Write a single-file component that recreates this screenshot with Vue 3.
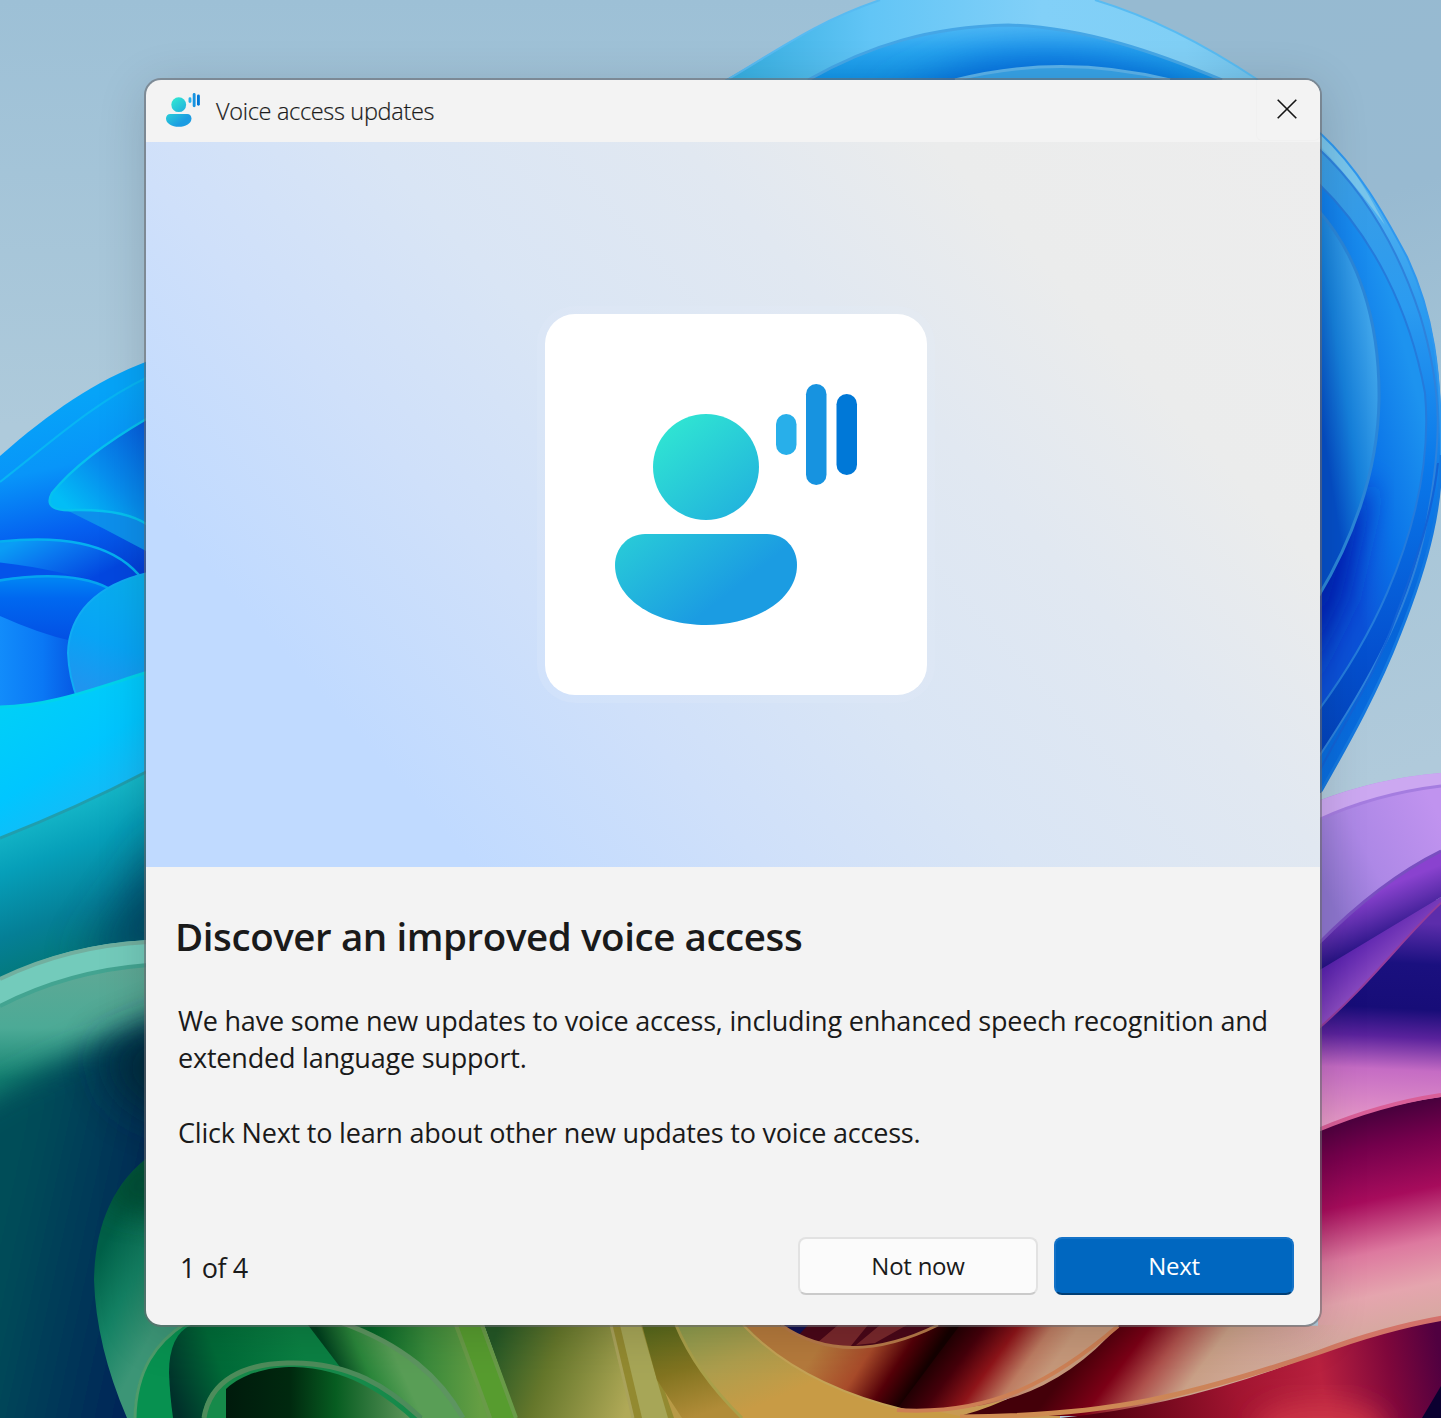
<script setup>
const title = 'Voice access updates'
const page = 1
const pageCount = 4
</script>

<template>
  <div class="desktop">
    <svg class="wallpaper" viewBox="0 0 1441 1418" aria-hidden="true">
      <defs>
        <filter id="soft" x="-30%" y="-30%" width="160%" height="160%"><feGaussianBlur stdDeviation="14" /></filter>
        <filter id="softer" x="-100%" y="-100%" width="300%" height="300%"><feGaussianBlur stdDeviation="22" /></filter>
        <linearGradient id="sky" x1="0" y1="0" x2="0" y2="1"><stop offset="0" stop-color="#9dc0d6" /><stop offset=".3" stop-color="#aecadb" /><stop offset="1" stop-color="#b2cbdc" /></linearGradient>
        <linearGradient id="skyRight" gradientUnits="userSpaceOnUse" x1="1200" y1="0" x2="1441" y2="760"><stop offset="0" stop-color="#96bad1" /><stop offset=".3" stop-color="#98bad1" /><stop offset=".6" stop-color="#a6c5d7" /><stop offset="1" stop-color="#b0cadb" /></linearGradient>
        <linearGradient id="crown" gradientUnits="userSpaceOnUse" x1="730" y1="80" x2="1300" y2="60"><stop offset="0" stop-color="#35aee0" /><stop offset=".25" stop-color="#62c5f6" /><stop offset=".55" stop-color="#82d0f8" /><stop offset=".8" stop-color="#80cff5" /><stop offset="1" stop-color="#6cbce6" /></linearGradient>
        <linearGradient id="crownSide" gradientUnits="userSpaceOnUse" x1="0" y1="130" x2="0" y2="790"><stop offset="0" stop-color="#6ec0ea" /><stop offset=".12" stop-color="#4eb0f0" /><stop offset=".28" stop-color="#2a9bf0" /><stop offset=".55" stop-color="#0e7ae8" /><stop offset=".75" stop-color="#0664d8" /><stop offset="1" stop-color="#0a6fe0" /></linearGradient>
        <linearGradient id="band1" gradientUnits="userSpaceOnUse" x1="0" y1="28" x2="0" y2="90"><stop offset="0" stop-color="#4ab6f4" /><stop offset=".4" stop-color="#26a5ef" /><stop offset="1" stop-color="#0a8de4" /></linearGradient>
        <linearGradient id="ring2" gradientUnits="userSpaceOnUse" x1="0" y1="150" x2="0" y2="780"><stop offset="0" stop-color="#3c9ee4" /><stop offset=".25" stop-color="#2b9bf0" /><stop offset=".5" stop-color="#0a79ea" /><stop offset=".8" stop-color="#0450cf" /><stop offset="1" stop-color="#0340b8" /></linearGradient>
        <linearGradient id="ring3" gradientUnits="userSpaceOnUse" x1="1320" y1="470" x2="1430" y2="440"><stop offset="0" stop-color="#0b52d8" /><stop offset=".45" stop-color="#0a73e8" /><stop offset="1" stop-color="#1d93ef" /></linearGradient>
        <linearGradient id="ring4" gradientUnits="userSpaceOnUse" x1="1318" y1="400" x2="1380" y2="390"><stop offset="0" stop-color="#054fc8" /><stop offset=".45" stop-color="#1681dc" /><stop offset="1" stop-color="#3ea3e9" /></linearGradient>
        <linearGradient id="leftBloom" gradientUnits="userSpaceOnUse" x1="60" y1="400" x2="100" y2="580"><stop offset="0" stop-color="#06a4f8" /><stop offset=".35" stop-color="#0895f9" /><stop offset=".7" stop-color="#0560f0" /><stop offset="1" stop-color="#033fd8" /></linearGradient>
        <linearGradient id="fold" gradientUnits="userSpaceOnUse" x1="75" y1="515" x2="165" y2="430"><stop offset="0" stop-color="#02bdf6" /><stop offset=".4" stop-color="#078eee" /><stop offset="1" stop-color="#0657dc" /></linearGradient>
        <linearGradient id="petal2" gradientUnits="userSpaceOnUse" x1="20" y1="540" x2="50" y2="600"><stop offset="0" stop-color="#0a9df5" /><stop offset=".4" stop-color="#0a78f0" /><stop offset="1" stop-color="#0347e0" /></linearGradient>
        <linearGradient id="petal3" gradientUnits="userSpaceOnUse" x1="0" y1="580" x2="0" y2="640"><stop offset="0" stop-color="#0082f4" /><stop offset=".3" stop-color="#0068f0" /><stop offset="1" stop-color="#0350e4" /></linearGradient>
        <linearGradient id="petal4" gradientUnits="userSpaceOnUse" x1="0" y1="0" x2="85" y2="0"><stop offset="0" stop-color="#128cfb" /><stop offset=".5" stop-color="#0a78f5" /><stop offset="1" stop-color="#0550df" /></linearGradient>
        <linearGradient id="bulb" gradientUnits="userSpaceOnUse" x1="90" y1="690" x2="135" y2="570"><stop offset="0" stop-color="#1f95ef" /><stop offset=".4" stop-color="#08a4f5" /><stop offset="1" stop-color="#08b0ee" /></linearGradient>
        <linearGradient id="cyan" gradientUnits="userSpaceOnUse" x1="20" y1="700" x2="120" y2="860"><stop offset="0" stop-color="#00cff8" /><stop offset=".4" stop-color="#00c6ff" /><stop offset="1" stop-color="#2aaeee" /></linearGradient>
        <linearGradient id="teal" gradientUnits="userSpaceOnUse" x1="50" y1="800" x2="110" y2="965"><stop offset="0" stop-color="#18bccb" /><stop offset=".3" stop-color="#069fb9" /><stop offset=".65" stop-color="#057f96" /><stop offset="1" stop-color="#02766f" /></linearGradient>
        <linearGradient id="mint" gradientUnits="userSpaceOnUse" x1="0" y1="950" x2="0" y2="1080"><stop offset="0" stop-color="#63a895" /><stop offset=".6" stop-color="#4caa96" /><stop offset="1" stop-color="#148472" /></linearGradient>
        <linearGradient id="deep" gradientUnits="userSpaceOnUse" x1="0" y1="1250" x2="140" y2="1280"><stop offset="0" stop-color="#004e58" /><stop offset=".5" stop-color="#003b59" /><stop offset="1" stop-color="#002859" /></linearGradient>
        <linearGradient id="leaf" gradientUnits="userSpaceOnUse" x1="95" y1="1260" x2="170" y2="1300"><stop offset="0" stop-color="#006048" /><stop offset=".5" stop-color="#148264" /><stop offset="1" stop-color="#3c9576" /></linearGradient>
        <linearGradient id="g1" gradientUnits="userSpaceOnUse" x1="170" y1="1390" x2="300" y2="1340"><stop offset="0" stop-color="#00302a" /><stop offset=".4" stop-color="#006b38" /><stop offset="1" stop-color="#0b8143" /></linearGradient>
        <linearGradient id="g2" gradientUnits="userSpaceOnUse" x1="225" y1="0" x2="410" y2="0"><stop offset="0" stop-color="#001a0c" /><stop offset=".35" stop-color="#00290f" /><stop offset=".6" stop-color="#075d21" /><stop offset="1" stop-color="#5d945a" /></linearGradient>
        <linearGradient id="g3" gradientUnits="userSpaceOnUse" x1="335" y1="1370" x2="390" y2="1345"><stop offset="0" stop-color="#00401e" /><stop offset=".5" stop-color="#2b873b" /><stop offset="1" stop-color="#599e56" /></linearGradient>
        <linearGradient id="g4" gradientUnits="userSpaceOnUse" x1="370" y1="0" x2="480" y2="0"><stop offset="0" stop-color="#006526" /><stop offset=".5" stop-color="#398a3b" /><stop offset="1" stop-color="#659e43" /></linearGradient>
        <linearGradient id="g5" gradientUnits="userSpaceOnUse" x1="490" y1="1350" x2="630" y2="1400"><stop offset="0" stop-color="#245826" /><stop offset=".4" stop-color="#65772b" /><stop offset="1" stop-color="#b0a957" /></linearGradient>
        <linearGradient id="g6" gradientUnits="userSpaceOnUse" x1="690" y1="1325" x2="730" y2="1418"><stop offset="0" stop-color="#8c9b4d" /><stop offset=".5" stop-color="#ae9e4d" /><stop offset="1" stop-color="#c89b45" /></linearGradient>
        <linearGradient id="g7" gradientUnits="userSpaceOnUse" x1="660" y1="1325" x2="690" y2="1418"><stop offset="0" stop-color="#58691c" /><stop offset=".5" stop-color="#827420" /><stop offset="1" stop-color="#b18c38" /></linearGradient>
        <linearGradient id="orange" gradientUnits="userSpaceOnUse" x1="820" y1="1345" x2="905" y2="1400"><stop offset="0" stop-color="#b57a3c" /><stop offset=".45" stop-color="#a84b2a" /><stop offset=".75" stop-color="#540008" /><stop offset="1" stop-color="#140000" /></linearGradient>
        <linearGradient id="red1" gradientUnits="userSpaceOnUse" x1="930" y1="1345" x2="1020" y2="1410"><stop offset="0" stop-color="#100000" /><stop offset=".3" stop-color="#45000a" /><stop offset=".55" stop-color="#8e1419" /><stop offset=".8" stop-color="#bd7c62" /><stop offset="1" stop-color="#c6987a" /></linearGradient>
        <linearGradient id="red2" gradientUnits="userSpaceOnUse" x1="1090" y1="1340" x2="1290" y2="1490"><stop offset="0" stop-color="#440009" /><stop offset=".16" stop-color="#7c0016" /><stop offset=".28" stop-color="#ae514c" /><stop offset=".42" stop-color="#c9a087" /><stop offset=".78" stop-color="#d0ac96" stop-opacity="0" /></linearGradient>
        <linearGradient id="rose" gradientUnits="userSpaceOnUse" x1="1320" y1="1110" x2="1370" y2="1340"><stop offset="0" stop-color="#380037" /><stop offset=".2" stop-color="#74004c" /><stop offset=".42" stop-color="#a70c5c" /><stop offset=".64" stop-color="#dd799f" /><stop offset=".82" stop-color="#e5a5ae" /><stop offset="1" stop-color="#d4a99e" /></linearGradient>
        <linearGradient id="crimson" gradientUnits="userSpaceOnUse" x1="1100" y1="1420" x2="1441" y2="1360"><stop offset="0" stop-color="#52000f" /><stop offset=".4" stop-color="#a11430" /><stop offset=".65" stop-color="#b9213f" /><stop offset=".85" stop-color="#7f073b" /><stop offset="1" stop-color="#500040" /></linearGradient>
        <linearGradient id="rim" gradientUnits="userSpaceOnUse" x1="1040" y1="0" x2="1441" y2="0"><stop offset="0" stop-color="#cf8c52" /><stop offset=".4" stop-color="#cc8458" /><stop offset="1" stop-color="#d4706c" /></linearGradient>
        <linearGradient id="lilac" gradientUnits="userSpaceOnUse" x1="1320" y1="880" x2="1441" y2="820"><stop offset="0" stop-color="#8e76cf" /><stop offset=".4" stop-color="#ad88e6" /><stop offset="1" stop-color="#c093ef" /></linearGradient>
        <linearGradient id="violet" gradientUnits="userSpaceOnUse" x1="1365" y1="895" x2="1385" y2="945"><stop offset="0" stop-color="#8a42cf" /><stop offset=".4" stop-color="#6230b0" /><stop offset="1" stop-color="#201080" /></linearGradient>
        <linearGradient id="violet2" gradientUnits="userSpaceOnUse" x1="1340" y1="955" x2="1370" y2="990"><stop offset="0" stop-color="#5922ae" /><stop offset="1" stop-color="#9150c3" /></linearGradient>
        <linearGradient id="navy" gradientUnits="userSpaceOnUse" x1="1360" y1="920" x2="1350" y2="1125"><stop offset="0" stop-color="#5c2dab" /><stop offset=".2" stop-color="#1a107f" /><stop offset=".42" stop-color="#170d78" /><stop offset=".56" stop-color="#5a229c" /><stop offset=".72" stop-color="#c56cc4" /><stop offset="1" stop-color="#e89bc8" /></linearGradient>
        <clipPath id="band1Clip"><path d="M808 80C870 45 930 27 1008 25C1085 27 1160 54 1222 80Z" /></clipPath>
        <clipPath id="ring3Clip"><path d="M1318 183C1372 235 1410 310 1425 393C1431 460 1414 530 1387 593C1365 644 1340 681 1318 711Z" /></clipPath>
        <clipPath id="deepClip"><path d="M0 1010Q68 974 148 968V1418H0Z" /></clipPath>
        <clipPath id="tealClip"><path d="M0 838Q75 809 148 771V980H0Z" /></clipPath>
        <clipPath id="leafClip"><path d="M155 1152C110 1183 95 1230 94 1280Q96 1346 127 1418H260V1300H155Z" /></clipPath>
      </defs>

      <rect width="1441" height="1418" fill="url(#sky)" />
      <rect x="1100" width="341" height="820" fill="url(#skyRight)" />

      <!-- top and right petals -->
      <path fill="url(#crown)" d="M725 80C775 52 815 22 880 0C940-22 1040-22 1095 0C1155 18 1210 48 1258 80Q1292 106 1320 132V200H725Z" />
      <path fill="url(#crownSide)" d="M1300 118L1320 132C1358 168 1383 212 1407 257C1434 315 1442 370 1442 455C1442 505 1431 555 1400 633C1378 690 1350 740 1321 793H1300Z" />
      <path fill="url(#band1)" d="M808 80C870 45 930 27 1008 25C1085 27 1160 54 1222 80Z" />
      <g clip-path="url(#band1Clip)">
        <path d="M880 110L960 72Q1060 38 1190 90V120Z" fill="#0560d8" filter="url(#softer)" />
      </g>
      <path fill="#37a2e6" d="M955 80Q1060 53 1170 80Z" />
      <g fill="none" stroke-width="3">
        <path stroke="#58bbf2" stroke-width="2" d="M725 81C775 52 815 22 880 0M1095 0C1155 18 1210 48 1258 80" />
        <path stroke="#45a6e6" d="M808 80C870 45 930 27 1008 25C1085 27 1160 54 1222 80" />
        <path stroke="#5bb2ea" d="M955 80Q1060 53 1170 80" />
      </g>
      <path fill="url(#ring2)" stroke="#2e82dc" stroke-width="2" d="M1318 148C1365 192 1398 248 1420 315C1442 388 1444 440 1423 540C1406 613 1370 680 1318 758Z" />
      <path fill="#78c5ec" d="M1320 133C1345 155 1363 183 1385 225Q1350 178 1320 146Z" />
      <path fill="url(#ring3)" stroke="#247bdc" stroke-width="2" d="M1318 183C1372 235 1410 310 1425 393C1431 460 1414 530 1387 593C1365 644 1340 681 1318 711Z" />
      <g clip-path="url(#ring3Clip)">
        <path d="M1300 560L1372 480L1345 600L1300 690Z" fill="#0020b6" filter="url(#soft)" />
      </g>
      <path fill="url(#ring4)" d="M1318 210C1358 255 1380 320 1379 400C1378 475 1350 544 1318 597Z" />
      <path fill="none" stroke="#2b86d8" stroke-width="3" d="M1318 210C1358 255 1380 320 1379 400C1378 475 1350 544 1318 597" />
      <path fill="none" stroke="#2f97ee" stroke-width="2" d="M1320 133C1358 168 1383 212 1407 257C1434 315 1441 370 1441 455" />
      <path fill="none" stroke="#1478e0" stroke-width="3" d="M1441 455C1441 505 1431 555 1400 633C1378 690 1350 740 1321 791" />
      <path fill="none" stroke="#1263d6" stroke-width="2" d="M1438 463C1433 510 1417 560 1397 613C1378 670 1350 712 1320 770" />

      <!-- left petals -->
      <path fill="url(#leftBloom)" d="M0 456C50 412 95 381 148 361V710H0Z" />
      <path fill="none" stroke="#08b5f4" stroke-width="2" d="M0 482C50 443 95 402 148 377" />
      <path fill="#0d8fec" d="M52 503C90 508 128 508 148 525V552Q100 526 52 503Z" />
      <path fill="url(#fold)" d="M148 418C105 443 72 468 52 493Q42 512 75 510Q125 509 148 525Z" />
      <path fill="none" stroke="#06c1ef" stroke-width="2.5" d="M148 418C105 443 72 468 52 493Q42 512 75 510Q125 509 148 525" />
      <path fill="url(#petal2)" stroke="#05aff0" stroke-width="2.5" d="M-4 542C60 535 110 542 139 575L110 592L-4 563Z" />
      <path fill="#0453ea" d="M-4 562Q60 569 110 587L100 600H-4Z" />
      <path fill="url(#petal3)" d="M-4 580Q70 568 108 588L80 645L-4 650Z" />
      <path fill="none" stroke="#05a4f0" stroke-width="2.5" d="M-4 581Q70 569 108 588" />
      <path fill="url(#petal4)" d="M0 616Q40 634 72 641L82 700L0 712Z" />
      <path fill="url(#bulb)" stroke="#10acf4" stroke-width="2" d="M148 573C95 585 69 615 68 653Q69 678 78 700H148Z" />
      <path fill="url(#cyan)" d="M0 707C50 706 90 690 148 672V775L0 842Z" />
      <path fill="none" stroke="#00d3ec" stroke-width="3" d="M0 707C50 706 90 690 148 672" />
      <path fill="url(#teal)" d="M0 838Q75 809 148 771V980H0Z" />
      <g clip-path="url(#tealClip)">
        <path d="M175 830V960L80 965Z" fill="#004163" opacity=".85" filter="url(#softer)" />
      </g>
      <path fill="none" stroke="#209eae" stroke-width="3" d="M0 838Q75 809 148 771" />
      <path fill="#73cbbb" d="M0 978Q68 944 148 940V1100H0Z" />
      <path fill="none" stroke="#72af9f" stroke-width="4" d="M0 979Q68 946 148 942" />
      <path fill="url(#mint)" d="M0 1006Q68 971 148 965V1418H0Z" />
      <path fill="none" stroke="#43a491" stroke-width="4" d="M0 1006Q68 971 148 965" />
      <g clip-path="url(#deepClip)">
        <path fill="url(#deep)" filter="url(#soft)" d="M-60 1130Q40 1058 210 1003V1480H-60Z" />
        <path fill="#002b37" opacity=".85" filter="url(#softer)" d="M200 1010L100 1050L125 1100L200 1130Z" />
      </g>
      <path fill="url(#leaf)" d="M155 1152C110 1183 95 1230 94 1280Q96 1346 127 1418H260V1300H155Z" />
      <g clip-path="url(#leafClip)">
        <path fill="#004c31" opacity=".8" filter="url(#soft)" d="M170 1130L100 1180L110 1210L170 1220Z" />
      </g>

      <!-- bottom petals -->
      <path fill="#b89a46" d="M600 1325H940V1418H600Z" />
      <path fill="#c89b55" d="M900 1400H1060V1418H900Z" />
      <path fill="#079150" d="M134 1418C135 1370 155 1342 185 1323H360V1418Z" />
      <path fill="none" stroke="#4f9b6c" stroke-width="3" d="M135 1418C136 1370 156 1342 186 1323" />
      <path fill="url(#g1)" d="M191 1325Q169 1335 169 1373Q170 1397 173 1418H360V1325Z" />
      <path fill="url(#g4)" d="M340 1325H482L517 1418H440Z" />
      <path fill="#579c2f" d="M456 1325H483L518 1418H492Z" />
      <path fill="url(#g3)" d="M308 1325H350C408 1348 440 1377 463 1418H400L340 1367Z" />
      <path fill="none" stroke="#5d9560" stroke-width="5" d="M340 1322C404 1345 440 1377 463 1418" />
      <path fill="#168a4a" d="M202 1418C207 1380 242 1362 287 1362C350 1359 390 1388 422 1418Z" />
      <path fill="url(#g2)" d="M226 1418V1389C244 1372 271 1367 294 1367C345 1368 382 1393 410 1418Z" />
      <path fill="none" stroke="#4e8c5b" stroke-width="5" d="M204 1418C210 1380 244 1364 287 1363C350 1361 389 1388 421 1418" />
      <path fill="url(#g5)" d="M484 1325H614L636 1418H517Z" />
      <path fill="none" stroke="#699b48" stroke-width="4" d="M482 1325L516 1418M456 1325L490 1418" />
      <path fill="#938a30" d="M611 1325H642L674 1418H633Z" />
      <path fill="#a7a657" d="M620 1325H641L668 1418H642Z" />
      <path fill="none" stroke="#aaa35b" stroke-width="3" d="M611 1325L633 1418" />
      <path fill="url(#g7)" d="M642 1325H678Q696 1373 745 1418H682L657 1380Z" />
      <path fill="url(#g6)" d="M675 1325H750Q810 1390 930 1410L970 1418H742Q696 1373 675 1325Z" />
      <path fill="none" stroke="#aaa04a" stroke-width="3" d="M676 1325Q696 1373 742 1418" />
      <path fill="url(#orange)" d="M745 1325H965L905 1410Q800 1385 745 1325Z" />
      <path fill="#4a0718" d="M780 1325H940Q845 1370 780 1325Z" />
      <path fill="#121050" d="M785 1325H808L798 1336Z" />
      <path fill="#79282c" d="M817 1343L838 1325H868L850 1347ZM856 1345L880 1325H907L875 1343Z" />
      <path fill="none" stroke="#b77a49" stroke-width="3" d="M781 1325Q846 1370 938 1325" />
      <path fill="url(#rose)" d="M1318 1085H1441V1320L1320 1356Q1200 1396 1140 1408V1326H1318Z" />
      <path fill="url(#red2)" d="M1090 1325H1441V1320L1320 1356Q1180 1402 1100 1416H960Q1055 1390 1090 1325Z" />
      <path fill="url(#red1)" d="M960 1325H1119Q1050 1405 947 1409H897Z" />
      <path fill="url(#crimson)" d="M1060 1418Q1190 1405 1321 1352Q1380 1329 1441 1318V1418Z" />
      <ellipse cx="1320" cy="1430" rx="65" ry="28" fill="#cc3547" filter="url(#soft)" />
      <path fill="#0b0030" d="M1441 1386V1418H1422Z" />
      <path fill="none" stroke="#c5a356" stroke-width="2" d="M743 1325Q800 1385 905 1410" />
      <path fill="none" stroke="#cd8055" stroke-width="4" d="M897 1410C992 1416 1055 1380 1118 1326" />
      <path fill="none" stroke="url(#rim)" stroke-width="5" d="M960 1417C1110 1416 1190 1396 1320 1352Q1385 1328 1443 1318" />

      <!-- right-hand lower petals -->
      <path fill="url(#navy)" d="M1318 900H1441V1097Q1380 1105 1318 1131Z" />
      <path fill="none" stroke="#d95f98" stroke-width="4" d="M1318 1130Q1380 1104 1441 1095" />
      <path fill="url(#violet2)" d="M1318 970L1441 897V903C1405 936 1370 984 1318 1029Z" />
      <path fill="none" stroke="#943c9c" stroke-width="2" d="M1441 903C1405 936 1370 984 1318 1029" />
      <path fill="url(#violet)" d="M1318 942Q1380 880 1441 850V897L1318 971Z" />
      <path fill="url(#lilac)" d="M1318 801Q1378 778 1441 773V850Q1380 880 1318 944Z" />
      <path fill="#cca8f1" d="M1318 801Q1378 778 1441 773V786Q1375 794 1318 820Z" />
      <path fill="none" stroke="#a57de0" stroke-width="3" d="M1318 820Q1375 794 1441 786" />
      <path fill="none" stroke="#794fc0" stroke-width="3" d="M1318 944Q1380 881 1441 851" />
    </svg>

    <svg class="sprite" aria-hidden="true">
      <defs>
        <linearGradient id="person" gradientUnits="userSpaceOnUse" x1="660" y1="438" x2="762" y2="567"><stop offset="0" stop-color="#2fe2d3" /><stop offset="1" stop-color="#1b9ce2" /></linearGradient>
        <symbol id="voice" viewBox="615 384 243 242">
          <circle cx="706" cy="467" r="53" fill="url(#person)" />
          <path fill="url(#person)" d="M645 534H767C785 534 797 548 797 565C797 600 755 625 706 625C657 625 615 600 615 565C615 548 628 534 645 534Z" />
          <rect x="776" y="414" width="20.5" height="41" rx="10.25" fill="#28afea" />
          <rect x="806" y="384" width="20.5" height="101" rx="10.25" fill="#1793e0" />
          <rect x="836.5" y="394" width="20.5" height="81" rx="10.25" fill="#0078d7" />
        </symbol>
      </defs>
    </svg>

    <section class="window">
      <header class="titlebar">
        <svg class="app-icon"><use href="#voice" /></svg>
        <span class="title">{{ title }}</span>
        <button class="close" aria-label="Close">
          <svg viewBox="0 0 20 20"><path d="M.7.7L19.3 19.3M19.3.7L.7 19.3" /></svg>
        </button>
      </header>
      <div class="hero">
        <div class="card"><svg class="hero-icon"><use href="#voice" /></svg></div>
      </div>
      <main class="content">
        <h1>Discover an improved voice access</h1>
        <p>We have some new updates to voice access, including enhanced speech recognition and<br>extended language support.</p>
        <p>Click Next to learn about other new updates to voice access.</p>
      </main>
      <footer class="footer">
        <span class="count">{{ page }} of {{ pageCount }}</span>
        <div class="actions">
          <button class="btn">Not now</button>
          <button class="btn primary">Next</button>
        </div>
      </footer>
    </section>
  </div>
</template>

<style>
body { margin: 0; overflow: hidden; }
</style>

<style scoped>
.desktop {
  position: relative;
  box-sizing: border-box;
  width: 1441px;
  height: 1418px;
  padding: 80px 121px 93px 146px;
  overflow: hidden;
  font-family: "Open Sans", "Noto Sans", sans-serif;
  color: #1a1a1a;
}
.wallpaper { position: absolute; inset: 0; width: 1441px; height: 1418px; }
.sprite { position: absolute; width: 0; height: 0; }
.window {
  position: relative;
  display: flex;
  flex-direction: column;
  height: 1245px;
  border-radius: 15px;
  background: #f3f3f3;
  box-shadow: 0 0 0 2px rgba(105, 105, 110, .58), 0 8px 50px rgba(0, 0, 0, .16);
}
.titlebar {
  display: flex;
  align-items: center;
  box-sizing: border-box;
  height: 62px;
  padding-left: 20px;
}
.app-icon { width: 34px; height: 34px; margin-top: -2px; }
.title {
  margin: 0 0 0 16px;
  font-size: 23.5px;
  font-weight: 300;
  line-height: 34px;
  letter-spacing: -.32px;
  white-space: nowrap;
  -webkit-text-stroke: .2px #1a1a1a;
}
.close {
  display: flex;
  align-items: center;
  justify-content: center;
  box-sizing: border-box;
  width: 64px;
  height: 61px;
  margin: 0 0 1px auto;
  padding: 0 2px 2px 0;
  border: 1px solid #f0f0f0;
  border-width: 0 0 1px 1px;
  border-radius: 0 15px 6px 6px;
  background: #f3f3f3;
}
.close svg { width: 20px; height: 20px; margin-right: 1px; fill: none; stroke: #151515; stroke-width: 1.6; overflow: visible; }
.hero {
  display: flex;
  align-items: center;
  justify-content: center;
  box-sizing: border-box;
  height: 725px;
  padding-left: 6px;
  background: linear-gradient(48deg, #c0daff 0%, #c0daff 18%, #cfe0fa 34%, #d9e5f5 48%, #e1e8f1 65%, #ebecec 79%, #ededed 100%);
}
.card {
  display: flex;
  box-sizing: border-box;
  width: 382px;
  height: 381px;
  padding: 70px 0 0 70px;
  border-radius: 30px;
  background: #fff;
  box-shadow: 0 0 0 8px rgba(228, 236, 252, .22);
}
.hero-icon { width: 243px; height: 242px; }
.content { height: 350px; padding: 42px 0 0 32px; box-sizing: border-box; }
h1 {
  margin: 0 0 39px -3px;
  font-size: 38.5px;
  font-weight: 600;
  line-height: 54px;
  letter-spacing: -.42px;
  white-space: nowrap;
}
p {
  margin: 0 0 38px;
  font-size: 27px;
  line-height: 37px;
  letter-spacing: -.2px;
  white-space: nowrap;
}
.footer {
  display: flex;
  justify-content: space-between;
  padding: 20px 26px 0 34px;
}
.count { font-size: 27px; line-height: 58px; padding-top: 2px; letter-spacing: -.4px; }
.actions { display: flex; gap: 16px; }
.btn {
  box-sizing: border-box;
  width: 240px;
  height: 58px;
  padding: 0 0 2px;
  border: 2px solid #e2e2e2;
  border-bottom-color: #cacaca;
  border-radius: 8px;
  background: #fbfbfb;
  color: #1a1a1a;
  font: 24px "Open Sans", "Noto Sans", sans-serif;
  letter-spacing: -.25px;
}
.primary { border-color: #1472c7 #1472c7 #003e75; background: #0067c0; color: #fff; }
</style>
